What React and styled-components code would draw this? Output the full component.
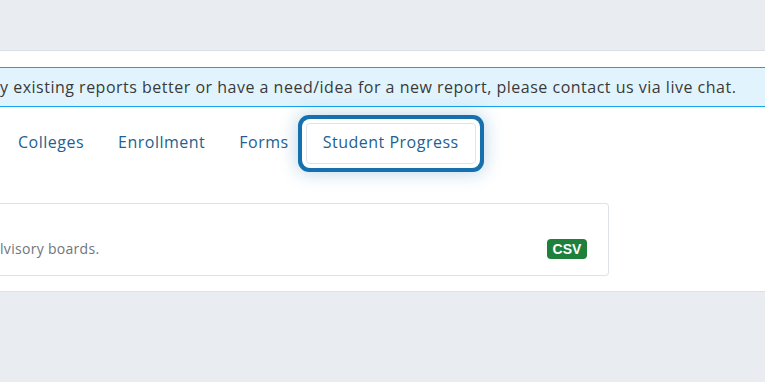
import React from "react";
import styled, { createGlobalStyle } from "styled-components";

const GlobalStyle = createGlobalStyle`
  body {
    margin: 0;
    background: #e9edf2;
    font-family: "Open Sans", "DejaVu Sans", sans-serif;
    overflow: hidden;
  }
`;

const tabs = ["Colleges", "Enrollment", "Forms", "Student Progress"];

const App = () => {
  const active = "Student Progress";

  return (
    <>
      <GlobalStyle />
      <Page>
        <Panel>
          <Alert>
            y existing reports better or have a need/idea for a new report,
            please contact us via live chat.
          </Alert>
          <TabRow>
            {tabs.map((t) => (
              <Tab key={t} $active={t === active}>
                {t}
              </Tab>
            ))}
          </TabRow>
          <Card>
            <p>lvisory boards.</p>
            <Badge>CSV</Badge>
          </Card>
        </Panel>
      </Page>
    </>
  );
};

export default App;

const Page = styled.div`
  padding-top: 50px;
  height: 382px;
  box-sizing: border-box;
`;

const Panel = styled.div`
  background: #fff;
  border-top: 1px solid #dcdfe4;
  border-bottom: 1px solid #dcdfe4;
  height: 242px;
  box-sizing: border-box;
  padding-top: 16px;
`;

const Alert = styled.div`
  height: 40px;
  box-sizing: border-box;
  background: #e1f4fd;
  border-top: 1px solid #14a3ee;
  border-bottom: 1px solid #14a3ee;
  color: #3a3a3a;
  font-size: 16px;
  letter-spacing: 0.5px;
  display: flex;
  align-items: center;
  white-space: nowrap;
`;

const TabRow = styled.div`
  display: flex;
  align-items: center;
  padding: 16px 0 0 1px;
`;

const Tab = styled.button`
  height: 41px;
  padding: 0 16px 3px;
  border: 1px solid ${(p) => (p.$active ? "#e0e3e7" : "transparent")};
  border-radius: 4px;
  background: #fff;
  color: #235f93;
  font-family: inherit;
  font-size: 16px;
  letter-spacing: 0.5px;
  line-height: 1;
  cursor: pointer;
  box-shadow: ${(p) =>
    p.$active
      ? "0 0 0 4px #fff, 0 0 0 8px #1570ad, 0 0 18px 9px rgba(21,112,173,0.28)"
      : "none"};
`;

const Card = styled.div`
  width: 611px;
  height: 73px;
  margin-top: 39px;
  margin-left: -2px;
  box-sizing: border-box;
  border: 1px solid #dee1e5;
  border-left: none;
  border-radius: 0 4px 4px 0;
  display: flex;
  align-items: flex-end;
  justify-content: space-between;
  padding: 0 21px 16px 2px;

  p {
    margin: 0 0 1px;
    color: #6f757d;
    font-size: 14px;
    letter-spacing: 0.3px;
  }
`;

const Badge = styled.span`
  background: #1e803a;
  color: #fff;
  font-family: "Liberation Sans", Arial, sans-serif;
  font-weight: 700;
  font-size: 14px;
  border-radius: 4px;
  width: 40px;
  height: 20px;
  display: flex;
  align-items: center;
  justify-content: center;
`;
